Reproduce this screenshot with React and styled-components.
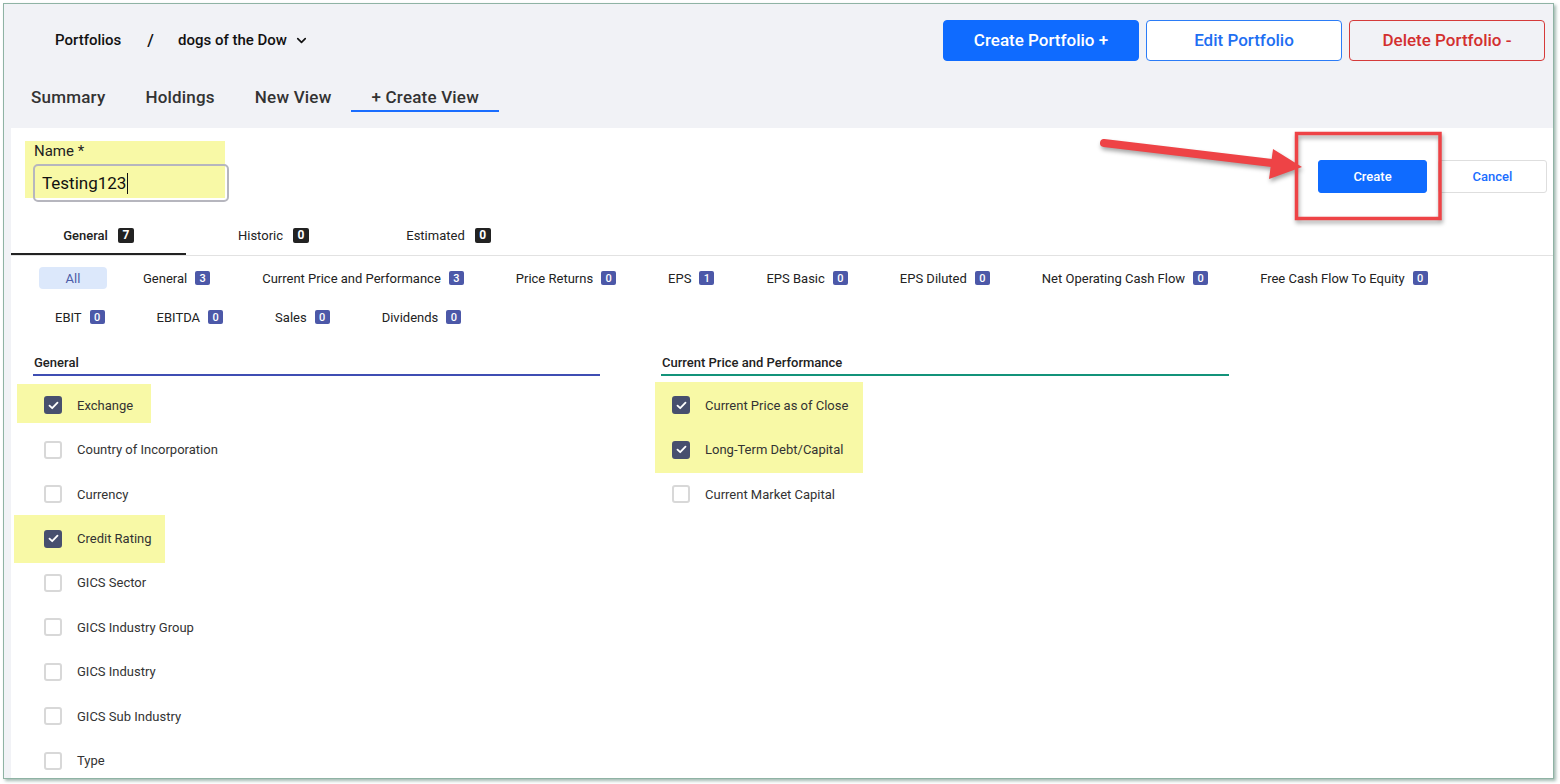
import React from "react";
import styled, { createGlobalStyle } from "styled-components";
import { ChevronDown } from "lucide-react";

const Global = createGlobalStyle`
  html, body { margin: 0; padding: 0; background: #ffffff; }
  body { font-family: Roboto, "Noto Sans", Arial, sans-serif; color: #222; }
  * { box-sizing: border-box; }
`;

const Root = styled.div`
  position: relative;
  width: 1560px;
  height: 784px;
  overflow: hidden;
  padding: 3px 0 0 3px;
`;

const Frame = styled.div`
  width: 1551px;
  height: 776px;
  border: 1px solid #8fb3a4;
  box-shadow: 2px 2px 3px rgba(90, 130, 115, 0.55);
  background: #f1f2f6;
  display: flex;
  flex-direction: column;
  overflow: hidden;
`;

const Header = styled.header`
  height: 124px;
  flex: none;
  display: flex;
  flex-direction: column;
`;

const TopBar = styled.div`
  display: flex;
  align-items: center;
  justify-content: space-between;
  padding: 16px 8px 0 51px;
  height: 56px;
`;

const Crumbs = styled.nav`
  display: flex;
  align-items: center;
  font-size: 15px;
  font-weight: 500;
  color: #111;
`;

const Crumb = styled.span`
  display: inline-flex;
  align-items: center;
  gap: 7px;
`;

const Slash = styled.span`
  margin: 0 24px 0 26px;
  font-size: 17px;
`;

const TopButtons = styled.div`
  display: flex;
  gap: 7px;
`;

const BigButton = styled.button`
  width: 196px;
  height: 41px;
  border-radius: 4px;
  font-family: Roboto, sans-serif;
  font-size: 17px;
  font-weight: 500;
  cursor: pointer;
  border: 1px solid
    ${(p) => (p.$variant === "primary" ? "#0f6bff" : p.$variant === "danger" ? "#d53a3a" : "#2b7cf7")};
  background: ${(p) => (p.$variant === "primary" ? "#0f6bff" : p.$variant === "danger" ? "transparent" : "#ffffff")};
  color: ${(p) => (p.$variant === "primary" ? "#ffffff" : p.$variant === "danger" ? "#d32f2f" : "#1f6ff2")};
`;

const ViewTabs = styled.div`
  display: flex;
  padding-left: 7px;
  margin-top: 20px;
`;

const ViewTab = styled.div`
  padding: 7px 20px 3px;
  line-height: 20px;
  font-size: 17px;
  letter-spacing: 0.2px;
  font-weight: 500;
  color: #333;
  border-bottom: 2px solid ${(p) => (p.$active ? "#1a6dff" : "transparent")};
`;

const Panel = styled.main`
  flex: 1;
  margin-left: 7px;
  background: #ffffff;
  display: flex;
  flex-direction: column;
`;

const TopArea = styled.div`
  height: 87px;
  flex: none;
  display: flex;
  justify-content: space-between;
  align-items: flex-start;
  padding: 0 6px 0 14px;
`;

const NameBox = styled.div`
  margin-top: 13px;
  width: 200px;
  height: 57px;
  background: #f8f9a6;
  display: flex;
  flex-direction: column;
`;

const NameLabel = styled.label`
  padding: 1px 0 0 9px;
  font-size: 15px;
  line-height: 18px;
  color: #222;
`;

const NameInput = styled.div`
  margin: 4px 0 0 8px;
  width: 196px;
  height: 38px;
  flex: none;
  border: 2px solid #b6b6be;
  border-radius: 5px;
  display: flex;
  align-items: center;
  padding-left: 7px;
  font-size: 17px;
  color: #111;
`;

const Caret = styled.span`
  display: inline-block;
  width: 1px;
  height: 21px;
  background: #111;
  margin-left: 1px;
`;

const FormButtons = styled.div`
  margin-top: 32px;
  display: flex;
  gap: 11px;
`;

const SmallButton = styled.button`
  width: 109px;
  height: 33px;
  border-radius: 3px;
  font-family: Roboto, sans-serif;
  font-size: 13px;
  font-weight: 500;
  cursor: pointer;
  border: 1px solid ${(p) => (p.$primary ? "#0f6bff" : "#dedede")};
  background: ${(p) => (p.$primary ? "#0f6bff" : "#ffffff")};
  color: ${(p) => (p.$primary ? "#ffffff" : "#1a6dff")};
`;

const GroupTabs = styled.div`
  display: flex;
  border-bottom: 1px solid #e2e2e2;
  flex: none;
`;

const GroupTab = styled.div`
  width: 175px;
  height: 40px;
  display: flex;
  align-items: center;
  justify-content: center;
  gap: 10px;
  font-size: 13px;
  color: #222;
  font-weight: ${(p) => (p.$active ? 500 : 400)};
  border-bottom: 2px solid ${(p) => (p.$active ? "#222" : "transparent")};
  padding-top: 2px;
`;

const DarkBadge = styled.span`
  display: inline-flex;
  align-items: center;
  justify-content: center;
  width: 16px;
  height: 15px;
  border-radius: 2px;
  background: #222;
  color: #fff;
  font-size: 12px;
  font-weight: 700;
`;

const Chips = styled.div`
  padding: 11px 0 0 18px;
  display: flex;
  flex-direction: column;
  gap: 17px;
`;

const ChipRow = styled.div`
  display: flex;
`;

const Chip = styled.div`
  margin: 0 10px;
  padding: 0 16px;
  height: 22px;
  min-width: ${(p) => (p.$active ? "68px" : "0")};
  display: flex;
  align-items: center;
  justify-content: center;
  gap: 8px;
  border-radius: 4px;
  font-size: 13px;
  color: ${(p) => (p.$active ? "#4d5ca8" : "#222")};
  background: ${(p) => (p.$active ? "#dce8fb" : "transparent")};
`;

const CountBadge = styled.span`
  display: inline-flex;
  align-items: center;
  justify-content: center;
  width: 15px;
  height: 14px;
  border-radius: 2px;
  background: #4c58a8;
  color: #fff;
  font-size: 11px;
  font-weight: 500;
`;

const Columns = styled.div`
  display: grid;
  grid-template-columns: 567px 568px;
  column-gap: 61px;
  padding-left: 22px;
  margin-top: 27px;
`;

const Column = styled.section`
  position: relative;
`;

const ColumnTitle = styled.h3`
  margin: 0;
  padding: 0 0 3px 1px;
  font-size: 13px;
  line-height: 16px;
  font-weight: 500;
  color: #222;
  border-bottom: 2px solid ${(p) => p.$color};
`;

const List = styled.div`
  position: relative;
  padding-top: 7px;
`;

const Highlight = styled.div`
  position: absolute;
  background: #f8f9a6;
  z-index: 0;
`;

const Item = styled.label`
  position: relative;
  z-index: 1;
  height: 44.45px;
  display: flex;
  align-items: center;
  gap: 15px;
  padding-left: 11px;
  font-size: 13px;
  color: #333;
`;

const Box = styled.span`
  width: 18px;
  height: 18px;
  flex: none;
  border-radius: 3px;
  display: inline-flex;
  align-items: center;
  justify-content: center;
  background: ${(p) => (p.$checked ? "#474f6e" : "#fff")};
  border: 2px solid ${(p) => (p.$checked ? "#474f6e" : "#d8d8d8")};
`;

const Overlay = styled.svg`
  position: absolute;
  left: 0;
  top: 0;
  pointer-events: none;
  overflow: visible;
`;

const Check = () => (
  <svg width="11" height="9" viewBox="0 0 11 9">
    <path d="M1.5 4.6 L4.2 7.2 L9.5 1.6" fill="none" stroke="#fff" strokeWidth="1.8" strokeLinecap="round" strokeLinejoin="round" />
  </svg>
);

const row1 = [
  ["General", 3],
  ["Current Price and Performance", 3],
  ["Price Returns", 0],
  ["EPS", 1],
  ["EPS Basic", 0],
  ["EPS Diluted", 0],
  ["Net Operating Cash Flow", 0],
  ["Free Cash Flow To Equity", 0],
];
const row2 = [
  ["EBIT", 0],
  ["EBITDA", 0],
  ["Sales", 0],
  ["Dividends", 0],
];

const generalItems = [
  ["Exchange", true],
  ["Country of Incorporation", false],
  ["Currency", false],
  ["Credit Rating", true],
  ["GICS Sector", false],
  ["GICS Industry Group", false],
  ["GICS Industry", false],
  ["GICS Sub Industry", false],
  ["Type", false],
];
const priceItems = [
  ["Current Price as of Close", true],
  ["Long-Term Debt/Capital", true],
  ["Current Market Capital", false],
];

const CheckItem = ({ label, checked }) => (
  <Item>
    <Box $checked={checked}>{checked && <Check />}</Box>
    {label}
  </Item>
);

export default function App() {
  return (
    <Root>
      <Global />
      <Frame>
        <Header>
          <TopBar>
            <Crumbs>
              <Crumb>Portfolios</Crumb>
              <Slash>/</Slash>
              <Crumb>
                dogs of the Dow
                <ChevronDown size={15} strokeWidth={2.6} />
              </Crumb>
            </Crumbs>
            <TopButtons>
              <BigButton $variant="primary">Create Portfolio +</BigButton>
              <BigButton>Edit Portfolio</BigButton>
              <BigButton $variant="danger">Delete Portfolio -</BigButton>
            </TopButtons>
          </TopBar>
          <ViewTabs>
            <ViewTab>Summary</ViewTab>
            <ViewTab>Holdings</ViewTab>
            <ViewTab>New View</ViewTab>
            <ViewTab $active>+ Create View</ViewTab>
          </ViewTabs>
        </Header>
        <Panel>
          <TopArea>
            <NameBox>
              <NameLabel>Name *</NameLabel>
              <NameInput>
                Testing123
                <Caret />
              </NameInput>
            </NameBox>
            <FormButtons>
              <SmallButton $primary>Create</SmallButton>
              <SmallButton>Cancel</SmallButton>
            </FormButtons>
          </TopArea>
          <GroupTabs>
            <GroupTab $active>
              General <DarkBadge>7</DarkBadge>
            </GroupTab>
            <GroupTab>
              Historic <DarkBadge>0</DarkBadge>
            </GroupTab>
            <GroupTab>
              Estimated <DarkBadge>0</DarkBadge>
            </GroupTab>
          </GroupTabs>
          <Chips>
            <ChipRow>
              <Chip $active>All</Chip>
              {row1.map(([t, n]) => (
                <Chip key={t}>
                  {t} <CountBadge>{n}</CountBadge>
                </Chip>
              ))}
            </ChipRow>
            <ChipRow>
              {row2.map(([t, n]) => (
                <Chip key={t}>
                  {t} <CountBadge>{n}</CountBadge>
                </Chip>
              ))}
            </ChipRow>
          </Chips>
          <Columns>
            <Column>
              <ColumnTitle $color="#3f4eb3">General</ColumnTitle>
              <List>
                <Highlight style={{ left: -16, top: 8, width: 134, height: 39 }} />
                <Highlight style={{ left: -19, top: 139, width: 151, height: 48 }} />
                {generalItems.map(([l, c]) => (
                  <CheckItem key={l} label={l} checked={c} />
                ))}
              </List>
            </Column>
            <Column>
              <ColumnTitle $color="#13937a">Current Price and Performance</ColumnTitle>
              <List>
                <Highlight style={{ left: -6, top: 6, width: 208, height: 91 }} />
                {priceItems.map(([l, c]) => (
                  <CheckItem key={l} label={l} checked={c} />
                ))}
              </List>
            </Column>
          </Columns>
        </Panel>
      </Frame>
      <Overlay width="1560" height="784" viewBox="0 0 1560 784">
        <g style={{ filter: "drop-shadow(1px 3px 2px rgba(0,0,0,0.35))" }}>
          <rect x="1296.5" y="133.5" width="143.5" height="85" fill="none" stroke="#ee4346" strokeWidth="3.5" />
          <line x1="1104" y1="143" x2="1276" y2="163.5" stroke="#ee4346" strokeWidth="8" strokeLinecap="round" />
          <polygon points="1273,149 1269,179 1302,167" fill="#ee4346" />
        </g>
      </Overlay>
    </Root>
  );
}
